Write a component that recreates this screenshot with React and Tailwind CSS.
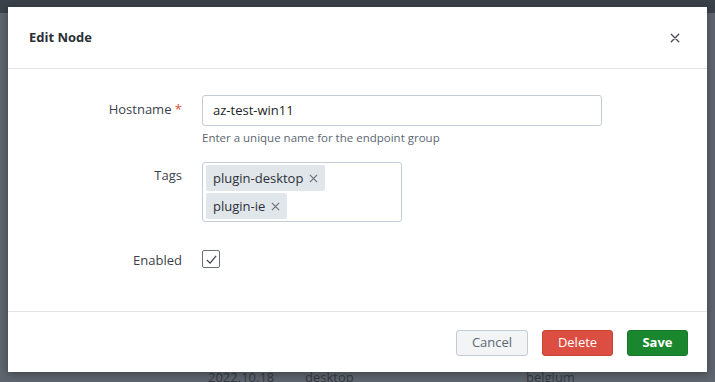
import React from "react";

function XIcon({ className }) {
  return (
    <svg viewBox="0 0 12 12" className={className} fill="none" stroke="currentColor" strokeWidth="1.6" strokeLinecap="round">
      <path d="M1.5 1.5 L10.5 10.5 M10.5 1.5 L1.5 10.5" />
    </svg>
  );
}

function Chip({ label }) {
  return (
    <div className="flex h-[26px] items-center gap-[6px] rounded-[2px] bg-[#e1e6eb] pl-[7px] pr-[7px] text-[13px] text-[#2c3038]">
      <span>{label}</span>
      <svg viewBox="0 0 10 10" className="h-[9px] w-[9px] text-[#6b7079]" fill="none" stroke="currentColor" strokeWidth="1.3">
        <path d="M1 1 L9 9 M9 1 L1 9" />
      </svg>
    </div>
  );
}

export default function App() {
  return (
    <div
      className="relative h-[382px] w-[715px] overflow-hidden bg-[#5e656e]"
      style={{ fontFamily: "'Open Sans', Lato, sans-serif" }}
    >
      {/* background page */}
      <div className="flex h-full flex-col">
        <div className="h-[13px] bg-[#3b4149]" />
        <div className="flex-1" />
        <div className="flex h-[12px] items-start text-[13px] leading-[14px] text-[#353a42]">
          <span className="ml-[208px] w-[97px]">2022.10.18</span>
          <span className="w-[221px]">desktop</span>
          <span>belgium</span>
        </div>
      </div>

      {/* modal */}
      <div className="absolute inset-0 pl-[8px] pt-[7px]">
        <div className="flex h-[365px] w-[699px] flex-col bg-white shadow-[0_2px_8px_rgba(0,0,0,0.35)]">
          <div className="flex h-[62px] items-center justify-between border-b border-[#e1e3e6] pl-[21px] pr-[27px]">
            <span className="text-[13px] font-bold text-[#2b2f36]">Edit Node</span>
            <XIcon className="h-[10px] w-[10px] text-[#454b54]" />
          </div>

          <div className="flex flex-1 flex-col border-b border-[#e1e3e6] pt-[26px]">
            {/* Hostname */}
            <div className="flex">
              <div className="w-[184px] pt-[5px] pr-[10px] text-right text-[13px] text-[#3c424b]">
                Hostname <span className="text-[#dc4e41]">*</span>
              </div>
              <div className="flex flex-col pl-[10px]">
                <div className="flex h-[31px] w-[400px] items-center rounded-[3px] border border-[#c3cbd4] px-[10px] text-[13px] text-[#1c1f24]">
                  az-test-win11
                </div>
                <div className="mt-[3px] text-[11.5px] text-[#5c6773]">Enter a unique name for the endpoint group</div>
              </div>
            </div>

            {/* Tags */}
            <div className="mt-[16px] flex">
              <div className="w-[184px] pt-[4px] pr-[10px] text-right text-[13px] text-[#3c424b]">Tags</div>
              <div className="pl-[10px]">
                <div className="flex h-[60px] w-[200px] flex-col items-start gap-[2px] rounded-[3px] border border-[#c3cbd4] p-[2px] pl-[3px]">
                  <Chip label="plugin-desktop" />
                  <Chip label="plugin-ie" />
                </div>
              </div>
            </div>

            {/* Enabled */}
            <div className="mt-[25px] flex items-center">
              <div className="w-[184px] pr-[10px] pt-[4px] text-right text-[13px] text-[#3c424b]">Enabled</div>
              <div className="pl-[10px]">
                <div className="flex h-[18px] w-[18px] items-center justify-center rounded-[2px] border border-[#69707a]">
                  <svg viewBox="0 0 14 14" className="h-[13px] w-[13px] text-[#3c424b]" fill="none" stroke="currentColor" strokeWidth="1.3">
                    <path d="M2 7.5 L5.5 11 L12 3" />
                  </svg>
                </div>
              </div>
            </div>
          </div>

          <div className="flex h-[60px] items-start justify-end gap-[14px] pr-[19px] pt-[18px]">
            <button className="h-[26px] w-[72px] rounded-[3px] border border-[#c3cbd4] bg-[#f2f4f5] text-[13px] text-[#5c6773]">
              Cancel
            </button>
            <button className="h-[26px] w-[71px] rounded-[3px] border border-[#c84535] bg-[#dc4e41] text-[13px] text-white">
              Delete
            </button>
            <button className="h-[26px] w-[61px] rounded-[3px] border border-[#17772a] bg-[#1a872e] text-[13px] font-bold text-white">
              Save
            </button>
          </div>
        </div>
      </div>
    </div>
  );
}
